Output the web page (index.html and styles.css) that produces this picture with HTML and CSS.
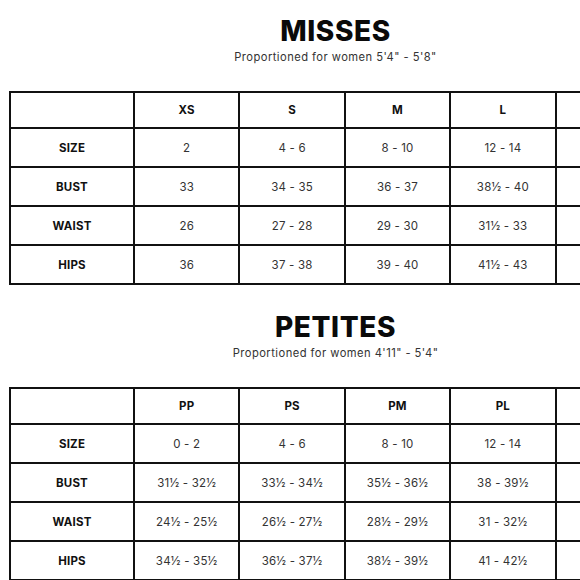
FILE: index.html
```html
<!DOCTYPE html>
<html>
<head>
<meta charset="utf-8">
<link rel="stylesheet" href="styles.css">
</head>
<body>
<div class="page">
  <section class="chart">
    <h1 class="title">MISSES</h1>
    <p class="sub">Proportioned for women 5'4" - 5'8"</p>
    <table class="sizes">
      <colgroup><col class="c-label"><col><col><col><col><col></colgroup>
      <tr class="head"><th></th><th>XS</th><th>S</th><th>M</th><th>L</th><th>XL</th></tr>
      <tr><th>SIZE</th><td>2</td><td>4 - 6</td><td>8 - 10</td><td>12 - 14</td><td>16</td></tr>
      <tr><th>BUST</th><td>33</td><td>34 - 35</td><td>36 - 37</td><td>38½ - 40</td><td>41½ - 43</td></tr>
      <tr><th>WAIST</th><td>26</td><td>27 - 28</td><td>29 - 30</td><td>31½ - 33</td><td>34½ - 36</td></tr>
      <tr><th>HIPS</th><td>36</td><td>37 - 38</td><td>39 - 40</td><td>41½ - 43</td><td>44½ - 46</td></tr>
    </table>
  </section>
  <section class="chart second">
    <h1 class="title">PETITES</h1>
    <p class="sub">Proportioned for women 4'11" - 5'4"</p>
    <table class="sizes">
      <colgroup><col class="c-label"><col><col><col><col><col></colgroup>
      <tr class="head"><th></th><th>PP</th><th>PS</th><th>PM</th><th>PL</th><th>PXL</th></tr>
      <tr><th>SIZE</th><td>0 - 2</td><td>4 - 6</td><td>8 - 10</td><td>12 - 14</td><td>16</td></tr>
      <tr><th>BUST</th><td>31½ - 32½</td><td>33½ - 34½</td><td>35½ - 36½</td><td>38 - 39½</td><td>41 - 42½</td></tr>
      <tr><th>WAIST</th><td>24½ - 25½</td><td>26½ - 27½</td><td>28½ - 29½</td><td>31 - 32½</td><td>34 - 35½</td></tr>
      <tr><th>HIPS</th><td>34½ - 35½</td><td>36½ - 37½</td><td>38½ - 39½</td><td>41 - 42½</td><td>44 - 45½</td></tr>
    </table>
  </section>
</div>
</body>
</html>
```

FILE: styles.css
```css
html, body {
  margin: 0;
  padding: 0;
  background: #fff;
  overflow: hidden;
}
body {
  width: 580px;
  height: 580px;
  font-family: Inter, "Liberation Sans", sans-serif;
  color: #222;
}
.page {
  width: 653px;
  margin-left: 9px;
  padding-top: 15px;
}
.chart {
  display: flex;
  flex-direction: column;
  align-items: center;
}
.second {
  margin-top: 26px;
}
.title {
  margin: 0;
  font-size: 28px;
  line-height: 32px;
  font-weight: 800;
  letter-spacing: 0.6px;
  color: #0a0a0a;
}
.sub {
  margin: 3px 0 0;
  font-size: 11.2px;
  line-height: 14px;
  letter-spacing: 0.45px;
  color: #333;
}
.sizes {
  margin-top: 27px;
  width: 653px;
  table-layout: fixed;
  border-collapse: collapse;
  border: 2px solid #111;
}
.c-label { width: 124px; }
.sizes th, .sizes td {
  border: 2px solid #111;
  text-align: center;
  padding: 0;
  height: 37px;
  font-size: 11.5px;
  letter-spacing: 0.2px;
}
.sizes th {
  font-weight: 700;
  color: #111;
}
.sizes td {
  font-weight: 400;
  color: #333;
}
.sizes .head th {
  height: 34px;
}
```
